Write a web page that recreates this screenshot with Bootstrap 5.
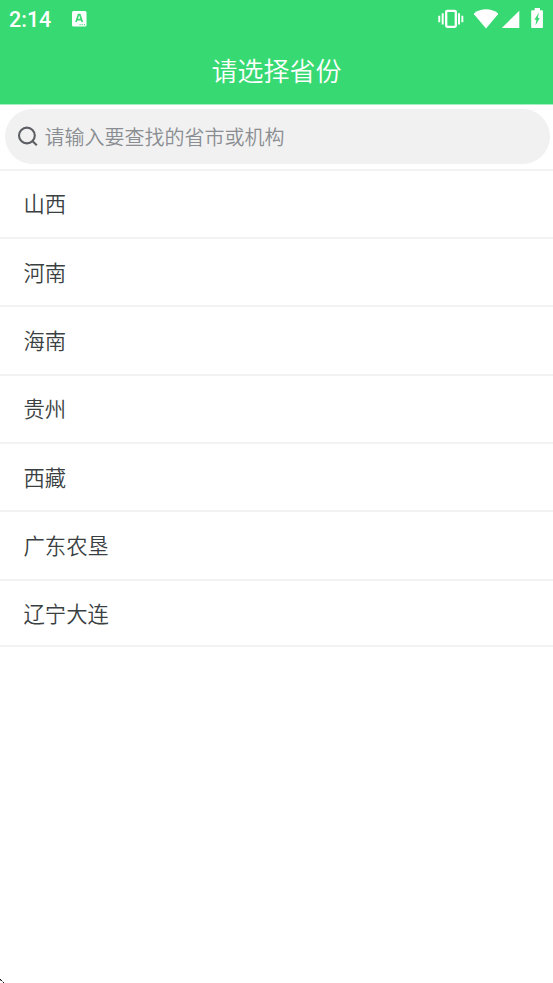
<!DOCTYPE html>
<html lang="zh-CN">
<head>
  <meta charset="UTF-8">
  <meta name="viewport" content="width=device-width, initial-scale=1">
  <title>请选择省份</title>
  <link href="https://cdn.jsdelivr.net/npm/bootstrap@5.3.0/dist/css/bootstrap.min.css" rel="stylesheet">
  <style>
    body {
      font-family: Roboto, "Noto Sans CJK SC", sans-serif;
      height: 983px;
      overflow: hidden;
    }
    .app-header {
      background: #37da72;
      height: 104px;
      box-shadow: 0 1px 0 #a5efc0;
    }
    .status-bar {
      height: 38px;
      padding-left: 9px;
    }
    .clock {
      font-size: 21.5px;
      font-weight: 500;
      line-height: 38px;
      width: 62px;
      padding-top: 2px;
    }
    .status-icon {
      margin-top: -2px;
    }
    .page-title,
    .search-box input,
    .province {
      font-family: "Noto Sans CJK SC", sans-serif;
      font-weight: 350;
    }
    .page-title {
      font-size: 26px;
      line-height: 64px;
    }
    .search-area {
      height: 66.6px;
      padding: 5px 3px 0 5px;
      border-bottom: 2px solid #f3f3f3;
    }
    .search-box {
      height: 55px;
      background: #f1f1f1;
      padding-left: 12px;
    }
    .search-box input {
      font-size: 20px;
      line-height: 30px;
      margin-left: 6.5px;
      padding: 1px 0 0;
    }
    .search-box input::placeholder {
      color: #8a8d91;
      opacity: 1;
    }
    .province {
      height: 68.33px;
      padding: 0 23.5px 1px;
      font-size: 21.33px;
      color: #3a3f42;
      border-bottom: 2px solid #f3f3f3;
    }
    .province:last-child {
      height: 66.6px;
      padding: 1px 23.5px 0;
    }
  </style>
</head>
<body class="bg-white position-relative">
  <header class="app-header text-white">
    <div class="status-bar d-flex align-items-center">
      <span class="clock">2:14</span>
      <svg class="status-icon flex-shrink-0" width="16" height="17" viewBox="0 0 16 17">
        <rect x="1" y="1" width="14.5" height="15.5" rx="1.5" fill="#fff"/>
        <path d="M5 12 7.5 4.5h1.3L11.3 12M6 9.7h4.3" fill="none" stroke="#37da72" stroke-width="1.7"/>
        <path d="M8.5 14.7h1.2m1 0h1.2m1 0h1.2" stroke="#37da72"/>
      </svg>
      <svg class="ms-auto flex-shrink-0" width="115" height="38" viewBox="0 0 115 38" fill="#fff">
        <!-- vibrate -->
        <path d="M.3 15.7h1.9v6.5H.3zM3.7 13.2h2v11.2h-2zM20 13.2h2v11.2h-2zM23.4 15.7h1.9v6.5h-1.9z"/>
        <rect x="8.200" y="10.800" width="9.600" height="16" rx="1" fill="none" stroke="#fff" stroke-width="2.300"/>
        <!-- wifi -->
        <path d="M48 28.500 36 14.300Q35.800 13.600 36.500 13Q41.500 9.300 48 9.300T59.500 13Q60.200 13.600 60 14.300Z"/>
        <!-- signal -->
        <path d="M64 28V27.700L81.300 10.800V28Z"/>
        <!-- battery -->
        <path d="M96.700 8h5.300v2.300h2.200q.7 0 .7.700V27.300q0 .8-.8.800H94q-.8 0-.8-.8V11q0-.7.700-.7h2.800z"/>
        <path d="M101 12.500 96.300 19.700h2.100L97.500 25.500l4.300-7.600h-2z" fill="#37da72"/>
      </svg>
    </div>
    <h1 class="page-title text-center mb-0">请选择省份</h1>
  </header>

  <div class="search-area">
    <div class="search-box rounded-pill d-flex align-items-center">
      <svg class="flex-shrink-0" width="21" height="21" viewBox="0 0 21 21" fill="none" stroke="#5d5f64" stroke-width="2.100">
        <circle cx="9.900" cy="9.500" r="7.900"/>
        <path d="M15.300 14.900 19.800 19.300"/>
      </svg>
      <input type="text" class="border-0 bg-transparent flex-grow-1" placeholder="请输入要查找的省市或机构">
    </div>
  </div>

  <div class="province-list">
    <div class="province d-flex align-items-center">山西</div>
    <div class="province d-flex align-items-center">河南</div>
    <div class="province d-flex align-items-center">海南</div>
    <div class="province d-flex align-items-center">贵州</div>
    <div class="province d-flex align-items-center">西藏</div>
    <div class="province d-flex align-items-center">广东农垦</div>
    <div class="province d-flex align-items-center">辽宁大连</div>
  </div>

  <!-- cursor tip in the corner -->
  <svg class="position-absolute bottom-0 start-0" width="4" height="4" viewBox="0 0 4 4" shape-rendering="crispEdges">
    <path d="M0 0h1v1H0zM1 1h1v1H1zM3 3h1v1H3z" fill="#111"/>
    <path d="M0 1h1v1H0zM2 2h1v1H2z" fill="#aaa"/>
  </svg>

  <script src="https://cdn.jsdelivr.net/npm/bootstrap@5.3.0/dist/js/bootstrap.bundle.min.js"></script>
</body>
</html>
